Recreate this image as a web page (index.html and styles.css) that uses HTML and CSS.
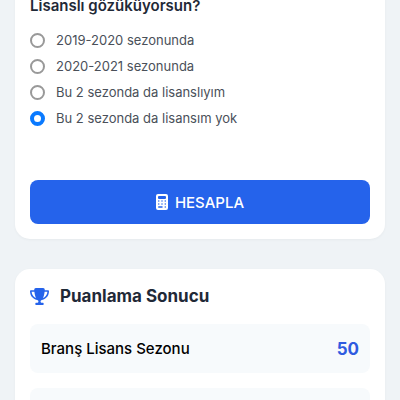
FILE: index.html
```html
<!DOCTYPE html>
<html lang="tr">
<head>
    <meta charset="UTF-8">
    <meta name="viewport" content="width=device-width, initial-scale=1.0">
    <title>Puanlama</title>
    <link rel="stylesheet" href="styles.css">
</head>
<body>
    <main class="container">
        <form class="card form-card">
            <fieldset class="question">
                <legend>Lisanslı gözüküyorsun?</legend>
                <label class="option"><input type="radio" name="sezon" value="2019">2019-2020 sezonunda</label>
                <label class="option"><input type="radio" name="sezon" value="2020">2020-2021 sezonunda</label>
                <label class="option"><input type="radio" name="sezon" value="iki">Bu 2 sezonda da lisanslıyım</label>
                <label class="option"><input type="radio" name="sezon" value="yok" checked>Bu 2 sezonda da lisansım yok</label>
            </fieldset>
            <button type="button" class="calc-btn">
                <svg class="calc-icon" viewBox="0 0 384 512" aria-hidden="true">
                    <path fill="currentColor" fill-rule="evenodd" d="M64 0H320a64 64 0 0 1 64 64V448a64 64 0 0 1-64 64H64a64 64 0 0 1-64-64V64A64 64 0 0 1 64 0zM96 64a32 32 0 0 0-32 32v32a32 32 0 0 0 32 32H288a32 32 0 0 0 32-32V96a32 32 0 0 0-32-32zM64 224a24 24 0 1 0 48 0a24 24 0 1 0-48 0zM168 224a24 24 0 1 0 48 0a24 24 0 1 0-48 0zM272 224a24 24 0 1 0 48 0a24 24 0 1 0-48 0zM64 320a24 24 0 1 0 48 0a24 24 0 1 0-48 0zM168 320a24 24 0 1 0 48 0a24 24 0 1 0-48 0zM272 320a24 24 0 1 0 48 0a24 24 0 1 0-48 0zM88 392a24 24 0 0 0 0 48H192a24 24 0 0 0 0-48zM272 416a24 24 0 1 0 48 0a24 24 0 1 0-48 0z"/>
                </svg>
                HESAPLA
            </button>
        </form>

        <section class="card">
            <h2 class="result-title">
                <svg class="trophy-icon" viewBox="0 0 576 512" aria-hidden="true">
                    <path fill="currentColor" d="M400 0H176c-26.500 0-48.100 21.800-47.100 48.200c.2 5.300 .4 10.600 .7 15.800H24C10.700 64 0 74.700 0 88c0 92.600 33.500 157 78.500 200.700c44.300 43.100 98.300 64.800 138.100 75.800c23.400 6.500 39.400 26 39.400 45.600c0 20.900-17 37.900-37.900 37.900H192c-17.700 0-32 14.300-32 32s14.300 32 32 32H384c17.700 0 32-14.300 32-32s-14.300-32-32-32H357.900C337 448 320 431 320 410.100c0-19.600 15.900-39.200 39.400-45.600c39.900-11 93.900-32.700 138.200-75.800C542.500 245 576 180.600 576 88c0-13.300-10.700-24-24-24H446.400c.3-5.200 .5-10.400 .7-15.800C448.100 21.800 426.500 0 400 0zM48.900 112h84.400c9.100 90.100 29.200 150.300 51.900 190.600c-24.900-11-50.800-26.500-73.200-48.300c-32-31.100-58-76-63-142.300zM464.100 254.300c-22.400 21.800-48.300 37.300-73.200 48.300c22.700-40.300 42.800-100.500 51.900-190.600h84.400c-5.100 66.300-31.100 111.200-63 142.300z"/>
                </svg>
                Puanlama Sonucu
            </h2>
            <div class="result-list">
                <div class="result-item">
                    <span>Branş Lisans Sezonu</span>
                    <strong class="score">50</strong>
                </div>
                <div class="result-item"></div>
            </div>
        </section>
    </main>
</body>
</html>
```
FILE: styles.css
```css
/* General Styling */
* {
    margin: 0;
    padding: 0;
    box-sizing: border-box;
    font-family: 'Inter', sans-serif;
}

body {
    background: #eff3f6;
    color: #000;
    overflow-x: hidden;
}

.container {
    display: flex;
    flex-direction: column;
    gap: 30px;
    padding: 0 15px 15px;
}

.card {
    background: #fff;
    border-radius: 15px;
    padding: 15px;
    box-shadow: 0 1px 3px rgba(0, 0, 0, 0.04);
}

.form-card {
    margin-top: -19px;
}

/* Question */
.question {
    border: none;
    margin-bottom: 49px;
}

.question legend {
    font-size: 15px;
    font-weight: 600;
    line-height: 20px;
    color: #1f2937;
    margin-bottom: 11px;
}

.option {
    display: flex;
    align-items: center;
    gap: 11px;
    height: 26px;
    font-size: 13px;
    color: #4a5059;
    cursor: pointer;
}

.option input {
    appearance: none;
    width: 15px;
    height: 15px;
    border: 2px solid #999;
    border-radius: 50%;
    background: #fff;
}

.option input:checked {
    border: 4px solid #0a7aff;
}

/* Button */
.calc-btn {
    display: flex;
    align-items: center;
    justify-content: center;
    gap: 7px;
    width: 100%;
    height: 44px;
    border: none;
    border-radius: 8px;
    background: #2563eb;
    color: #fff;
    font-size: 15px;
    font-weight: 500;
    cursor: pointer;
}

.calc-icon {
    width: 12px;
    height: 16px;
}

/* Results */
.result-title {
    display: flex;
    align-items: center;
    gap: 11px;
    font-size: 17px;
    font-weight: 700;
    line-height: 24px;
    color: #1f2937;
    margin-bottom: 16px;
}

.trophy-icon {
    width: 19px;
    height: 17px;
    color: #2563eb;
}

.result-list {
    display: flex;
    flex-direction: column;
    gap: 15px;
}

.result-item {
    display: flex;
    align-items: center;
    justify-content: space-between;
    min-height: 49px;
    padding: 0 11px;
    border-radius: 8px;
    background: #f7fafc;
    font-size: 15px;
    font-weight: 500;
}

.score {
    font-size: 17px;
    font-weight: 700;
    color: #2f5be0;
}
```
